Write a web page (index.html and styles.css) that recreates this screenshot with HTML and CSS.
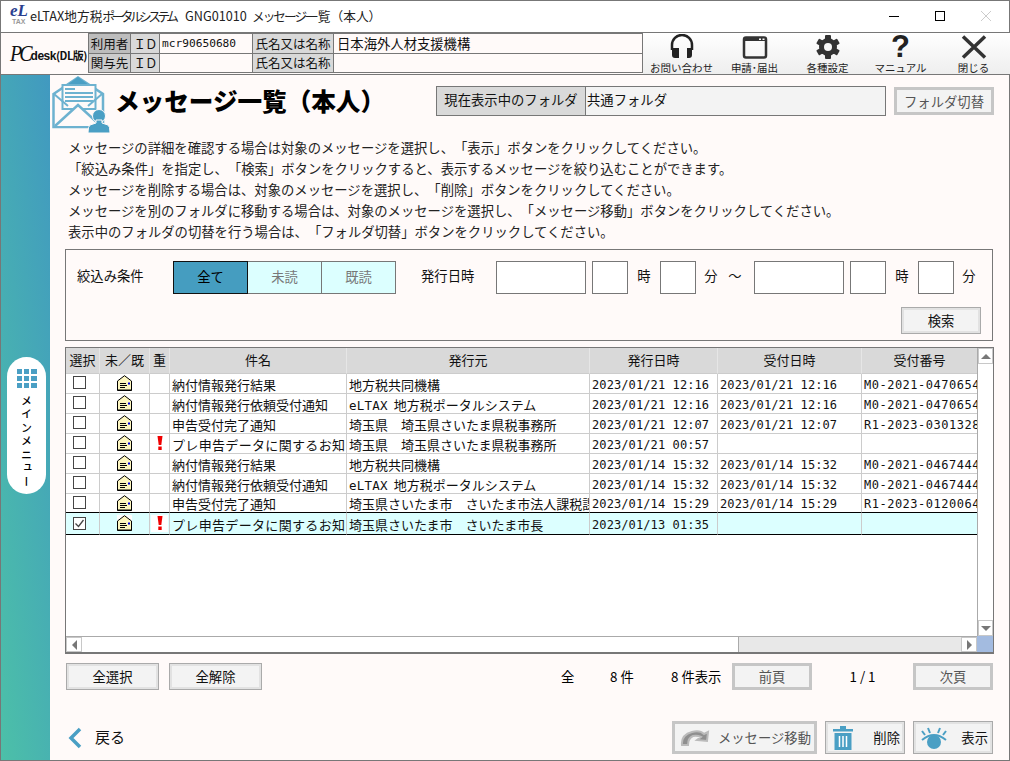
FILE: index.html
```html
<!DOCTYPE html>
<html lang="ja">
<head>
    <meta charset="UTF-8">
    <title>メッセージ一覧（本人）</title>
    <link rel="stylesheet" href="styles.css">
</head>
<body>
    <svg class="defs" width="0" height="0">
        <symbol id="mail" viewBox="0 0 15 16">
            <path d="M.5 15.5V6L7.5.7 14.5 6v9.5z" fill="#fdf6c0" stroke="#000"/>
            <path d="M.5 15h14M3 8.5h6M3 10.5h7M3 12.5h5" stroke="#000" fill="none"/>
            <rect x="11" y="7.5" width="2" height="2" fill="#0000e0"/>
        </symbol>
        <symbol id="alert" viewBox="0 0 6 14">
            <path d="M.5 0h5L4.300 9H1.700z" fill="#f00000"/>
            <rect x="1.300" y="10.500" width="3.400" height="3.500" fill="#f00000"/>
        </symbol>
    </svg>
    <div class="window">
        <div class="titlebar">
            <div class="app-logo"><span class="app-logo--el">eL</span><span class="app-logo--tax">TAX</span></div>
            <span class="titlebar-text titlebar-app">eLTAX地方税<span class="kana">ポータルシステム</span></span>
            <span class="titlebar-text titlebar-id">GNG01010</span>
            <span class="titlebar-text"><span class="kana-2">メッセージ</span>一覧（本人）</span>
            <div class="win-buttons">
                <svg width="10" height="10" viewBox="0 0 10 10"><path d="M0 5.500h10" stroke="#000"/></svg>
                <svg width="10" height="10" viewBox="0 0 10 10"><rect x=".5" y=".5" width="9" height="9" fill="none" stroke="#000"/></svg>
                <svg width="10" height="10" viewBox="0 0 10 10"><path d="M0 0l10 10M10 0L0 10" stroke="#ccc"/></svg>
            </div>
        </div>
        <div class="infobar">
            <div class="pc-logo"><i>PC</i><b>desk</b><span>(DL版)</span></div>
            <div class="user-table">
                <div class="cell cell-role">利用者</div>
                <div class="cell cell-label cell-id">ＩＤ</div>
                <div class="cell cell-code">mcr90650680</div>
                <div class="cell cell-label">氏名又は名称</div>
                <div class="cell cell-name">日本海外人材支援機構</div>
                <div class="cell cell-role cell-role--2">関与先</div>
                <div class="cell cell-label cell-id">ＩＤ</div>
                <div class="cell cell-code"></div>
                <div class="cell cell-label">氏名又は名称</div>
                <div class="cell cell-name"></div>
            </div>
            <div class="tools">
                <div class="tool">
                    <svg width="26" height="26" viewBox="0 0 26 26"><path d="M3 16V11a10 10 0 0 1 20 0v5" fill="none" stroke="#222" stroke-width="2.500"/><path d="M3 14h7v10H6q-3 0-3-3zM23 14h-5v10h2q3 0 3-3z" fill="#222"/></svg>
                    <span>お問い合わせ</span>
                </div>
                <div class="tool">
                    <svg width="26" height="26" viewBox="0 0 26 26"><rect x="2" y="3.500" width="22" height="20" rx="2" fill="none" stroke="#333" stroke-width="2.500"/><path d="M2 4h22v3H2z" fill="#333"/><path d="M17 4.500h2V6h-2zM20.500 4.500h2V6h-2z" fill="#fff"/></svg>
                    <span>申請･届出</span>
                </div>
                <div class="tool">
                    <svg width="26" height="26" viewBox="0 0 26 26">
                        <g fill="#333">
                            <rect x="10" y="1" width="6" height="24" rx="1"/>
                            <rect x="10" y="1" width="6" height="24" rx="1" transform="rotate(60 13 13)"/>
                            <rect x="10" y="1" width="6" height="24" rx="1" transform="rotate(120 13 13)"/>
                            <circle cx="13" cy="13" r="9"/>
                        </g>
                        <circle cx="13" cy="13" r="4" fill="#f8f8f8"/>
                    </svg>
                    <span>各種設定</span>
                </div>
                <div class="tool">
                    <b class="tool-help">?</b>
                    <span>マニュアル</span>
                </div>
                <div class="tool">
                    <svg width="26" height="26" viewBox="0 0 26 26"><path d="M2 2.500l22 21M24 2.500L2 23.500" stroke="#333" stroke-width="3.500" fill="none"/></svg>
                    <span>閉じる</span>
                </div>
            </div>
        </div>
        <div class="body">
            <aside class="sidebar">
                <div class="menu-pill">
                    <div class="menu-grid">
                        <i></i><i></i><i></i><i></i><i></i><i></i><i></i><i></i><i></i>
                    </div>
                    <div class="menu-text">メインメニュー</div>
                </div>
            </aside>
            <main class="main">
                <div class="page-head">
                    <svg class="page-icon" width="60" height="58" viewBox="0 0 60 58">
                        <path d="M1.500 18L26 1.500 51 18v33H1.500z" fill="none" stroke="#6db2d0" stroke-width="2.500"/>
                        <path d="M15 9L26 1l11 8z" fill="#4a9fc4"/>
                        <rect x="10.500" y="9" width="33" height="24" fill="#fffaf9" stroke="#6db2d0" stroke-width="2"/>
                        <path d="M13 12h10v2H13zM13 16h28v2H13zM13 20h28v2H13zM13 24h28v2H13z" fill="#6db2d0"/>
                        <path d="M2 18l14 12M50 18L36 30" stroke="#6db2d0" stroke-width="2"/>
                        <path d="M3 50l23-21 23 21" fill="#fffaf9" stroke="#6db2d0" stroke-width="2.500"/>
                        <circle cx="47" cy="40" r="6.500" fill="#4a9fc4" stroke="#fffaf9"/>
                        <path d="M44 44h6v3l6 2q2 1 2 8H36q0-7 2-8l6-2z" fill="#4a9fc4" stroke="#fffaf9"/>
                    </svg>
                    <h1>メッセージ一覧（本人）</h1>
                    <div class="folder">
                        <div class="folder-label">現在表示中のフォルダ</div>
                        <div class="folder-value">共通フォルダ</div>
                    </div>
                    <button class="btn btn-off btn-folder">フォルダ切替</button>
                </div>
                <div class="guide">
                    <p>メッセージの詳細を確認する場合は対象のメッセージを選択し、「表示」ボタンをクリックしてください。</p>
                    <p>「絞込み条件」を指定し、「検索」ボタンをクリックすると、表示するメッセージを絞り込むことができます。</p>
                    <p>メッセージを削除する場合は、対象のメッセージを選択し、「削除」ボタンをクリックしてください。</p>
                    <p>メッセージを別のフォルダに移動する場合は、対象のメッセージを選択し、「メッセージ移動」ボタンをクリックしてください。</p>
                    <p>表示中のフォルダの切替を行う場合は、「フォルダ切替」ボタンをクリックしてください。</p>
                </div>
                <div class="filter">
                    <div class="filter-row">
                        <span class="filter-title">絞込み条件</span>
                        <div class="tabs">
                            <div class="tab active">全て</div>
                            <div class="tab">未読</div>
                            <div class="tab">既読</div>
                        </div>
                        <span class="filter-date">発行日時</span>
                        <div class="field field-date"></div>
                        <div class="field field-time"></div>
                        <span class="unit unit-hour">時</span>
                        <div class="field field-time"></div>
                        <span class="unit unit-min">分</span>
                        <span class="unit unit-wave">～</span>
                        <div class="field field-date"></div>
                        <div class="field field-time"></div>
                        <span class="unit unit-hour">時</span>
                        <div class="field field-time"></div>
                        <span class="unit unit-min">分</span>
                    </div>
                    <div class="filter-foot">
                        <button class="btn btn-search">検索</button>
                    </div>
                </div>
                <div class="list">
                    <div class="list-body">
                        <table class="msg-table">
                            <colgroup>
                                <col class="c1"><col class="c2"><col class="c3"><col class="c4"><col class="c5"><col class="c6"><col class="c7"><col class="c8">
                            </colgroup>
                            <thead>
                                <tr><th>選択</th><th>未／既</th><th>重</th><th>件名</th><th>発行元</th><th>発行日時</th><th>受付日時</th><th>受付番号</th></tr>
                            </thead>
                            <tbody>
                                <tr>
                                    <td class="mid"><span class="check"></span></td>
                                    <td class="mid"><svg class="mail"><use href="#mail"/></svg></td>
                                    <td class="mid"></td>
                                    <td>納付情報発行結果</td>
                                    <td>地方税共同機構</td>
                                    <td class="num">2023/01/21 12:16</td>
                                    <td class="num">2023/01/21 12:16</td>
                                    <td class="num code">M0-2021-0470654</td>
                                </tr>
                                <tr>
                                    <td class="mid"><span class="check"></span></td>
                                    <td class="mid"><svg class="mail"><use href="#mail"/></svg></td>
                                    <td class="mid"></td>
                                    <td>納付情報発行依頼受付通知</td>
                                    <td><span class="lat">eLTAX</span>地方税ポータルシステム</td>
                                    <td class="num">2023/01/21 12:16</td>
                                    <td class="num">2023/01/21 12:16</td>
                                    <td class="num code">M0-2021-0470654</td>
                                </tr>
                                <tr>
                                    <td class="mid"><span class="check"></span></td>
                                    <td class="mid"><svg class="mail"><use href="#mail"/></svg></td>
                                    <td class="mid"></td>
                                    <td>申告受付完了通知</td>
                                    <td>埼玉県　埼玉県さいたま県税事務所</td>
                                    <td class="num">2023/01/21 12:07</td>
                                    <td class="num">2023/01/21 12:07</td>
                                    <td class="num code">R1-2023-0301328</td>
                                </tr>
                                <tr>
                                    <td class="mid"><span class="check"></span></td>
                                    <td class="mid"><svg class="mail"><use href="#mail"/></svg></td>
                                    <td class="mid"><svg class="alert"><use href="#alert"/></svg></td>
                                    <td class="wide">プレ申告データに関するお知</td>
                                    <td>埼玉県　埼玉県さいたま県税事務所</td>
                                    <td class="num">2023/01/21 00:57</td>
                                    <td class="num"></td>
                                    <td class="num"></td>
                                </tr>
                                <tr>
                                    <td class="mid"><span class="check"></span></td>
                                    <td class="mid"><svg class="mail"><use href="#mail"/></svg></td>
                                    <td class="mid"></td>
                                    <td>納付情報発行結果</td>
                                    <td>地方税共同機構</td>
                                    <td class="num">2023/01/14 15:32</td>
                                    <td class="num">2023/01/14 15:32</td>
                                    <td class="num code">M0-2021-0467444</td>
                                </tr>
                                <tr>
                                    <td class="mid"><span class="check"></span></td>
                                    <td class="mid"><svg class="mail"><use href="#mail"/></svg></td>
                                    <td class="mid"></td>
                                    <td>納付情報発行依頼受付通知</td>
                                    <td><span class="lat">eLTAX</span>地方税ポータルシステム</td>
                                    <td class="num">2023/01/14 15:32</td>
                                    <td class="num">2023/01/14 15:32</td>
                                    <td class="num code">M0-2021-0467444</td>
                                </tr>
                                <tr class="before-selected">
                                    <td class="mid"><span class="check"></span></td>
                                    <td class="mid"><svg class="mail"><use href="#mail"/></svg></td>
                                    <td class="mid"></td>
                                    <td>申告受付完了通知</td>
                                    <td>埼玉県さいたま市　さいたま市法人課税課</td>
                                    <td class="num">2023/01/14 15:29</td>
                                    <td class="num">2023/01/14 15:29</td>
                                    <td class="num code">R1-2023-0120064</td>
                                </tr>
                                <tr class="selected">
                                    <td class="mid"><span class="check on"><svg width="11" height="11" viewBox="0 0 11 11"><path d="M1.500 5.500l3 3 5-6.500" fill="none" stroke="#444" stroke-width="1.300"/></svg></span></td>
                                    <td class="mid"><svg class="mail mail-bg"><use href="#mail"/></svg></td>
                                    <td class="mid"><span class="alert-bg"><svg class="alert"><use href="#alert"/></svg></span></td>
                                    <td class="wide">プレ申告データに関するお知</td>
                                    <td>埼玉県さいたま市　さいたま市長</td>
                                    <td class="num">2023/01/13 01:35</td>
                                    <td class="num"></td>
                                    <td class="num"></td>
                                </tr>
                            </tbody>
                        </table>
                    </div>
                    <div class="vbar">
                        <div class="sb-btn"><span class="arrow-up"></span></div>
                        <div class="vbar-track"></div>
                        <div class="sb-btn"><span class="arrow-down"></span></div>
                    </div>
                    <div class="hbar">
                        <div class="sb-btn sb-btn--h"><span class="arrow-left"></span></div>
                        <div class="hbar-thumb"></div>
                        <div class="hbar-track"></div>
                        <div class="sb-btn sb-btn--h"><span class="arrow-right"></span></div>
                    </div>
                    <div class="corner"></div>
                </div>
                <div class="pager">
                    <button class="btn btn-select">全選択</button>
                    <button class="btn btn-select">全解除</button>
                    <span class="pager-all">全</span>
                    <span class="pager-count">8 件</span>
                    <span class="pager-shown">8 件表示</span>
                    <button class="btn btn-off btn-page">前頁</button>
                    <span class="pager-pos">1 / 1</span>
                    <button class="btn btn-off btn-page">次頁</button>
                </div>
                <div class="actions">
                    <svg class="back-icon" width="14" height="22" viewBox="0 0 14 22"><path d="M12 2L3 11l9 9" fill="none" stroke="#4a9fc4" stroke-width="3.500"/></svg>
                    <span class="back-text">戻る</span>
                    <button class="btn btn-off btn-act btn-move">
                        <svg width="30" height="18" viewBox="0 0 30 18"><path d="M2 16Q1 6 12 3q8-2 12 2l4-2-1 9-10-1 4-3q-4-2-8-1-5 2-5 9z" fill="#8f8f8f" stroke="#bbb" stroke-width="2"/></svg>
                        <span>メッセージ移動</span>
                    </button>
                    <button class="btn btn-act btn-del">
                        <svg width="20" height="24" viewBox="0 0 20 24"><path d="M0 3h20v2.500H0zM7 0h6v3H7z" fill="#4a9fc4"/><path d="M1.500 7h17v17h-17z" fill="#4a9fc4"/><path d="M6.500 10v11M10 10v11M13.500 10v11" stroke="#fff" stroke-width="1.500"/></svg>
                        <span>削除</span>
                    </button>
                    <button class="btn btn-act btn-show">
                        <svg width="26" height="24" viewBox="0 0 26 24"><circle cx="13" cy="16" r="7" fill="#4a9fc4"/><path d="M1 14q12-10 24 0" fill="none" stroke="#4a9fc4" stroke-width="2"/><path d="M1 5l3 4M7 2l2 5M19 2l-2 5M25 5l-3 4" stroke="#4a9fc4" stroke-width="2"/></svg>
                        <span>表示</span>
                    </button>
                </div>
            </main>
        </div>
    </div>
</body>
</html>
```

FILE: styles.css
```css
*,*::before,*::after{
    padding: 0;
    margin: 0;
    box-sizing: border-box;
}
body{
    width: 1010px;
    height: 761px;
    overflow: hidden;
    font-family: "Noto Sans CJK JP", "Liberation Sans", sans-serif;
    font-size: 13.33px;
    text-spacing-trim: space-all;
    color: #111;
    background: #fffaf9;
}
.defs{
    position: absolute;
}
.window{
    width: 1010px;
    height: 761px;
    border: 1px solid #777;
    display: flex;
    flex-direction: column;
}

/* タイトルバー */
.titlebar{
    height: 31px;
    background: #fff;
    display: flex;
    align-items: center;
    padding: 0 0 2px 8px;
    flex-shrink: 0;
}
.app-logo{
    width: 21px;
    height: 24px;
    position: relative;
    flex-shrink: 0;
}
.app-logo--el{
    position: absolute;
    top: -3px;
    left: 1px;
    font: italic bold 17px "Liberation Serif", serif;
    color: #2a3f8f;
}
.app-logo--tax{
    position: absolute;
    top: 14px;
    left: 3px;
    font: bold 7px "Liberation Sans", sans-serif;
    color: #999;
}
.titlebar-text{
    font-size: 12.7px;
    color: #222;
    white-space: nowrap;
}
.kana{
    letter-spacing: -3.5px;
}
.kana-2{
    letter-spacing: -2px;
}
.titlebar-app{
    width: 155px;
    flex-shrink: 0;
}
.titlebar-id{
    width: 67px;
    flex-shrink: 0;
}
.win-buttons{
    margin-left: auto;
    width: 102px;
    margin-right: 18px;
    display: flex;
    justify-content: space-between;
}

/* 利用者情報 */
.infobar{
    height: 43px;
    display: flex;
    flex-shrink: 0;
    border-top: 1px solid #777;
    border-bottom: 1px solid #777;
    background: #fffaf9;
}
.pc-logo{
    width: 87px;
    display: flex;
    align-items: baseline;
    padding: 9px 0 0 9px;
    white-space: nowrap;
    color: #111;
    flex-shrink: 0;
}
.pc-logo i{
    font: italic 20px "Liberation Serif", serif;
    letter-spacing: -3px;
    transform: scaleY(1.2);
}
.pc-logo b{
    font: bold 12px "Liberation Sans", sans-serif;
    margin-left: 1px;
    letter-spacing: -.5px;
}
.pc-logo span{
    font: bold 11px "Noto Sans CJK JP", sans-serif;
    letter-spacing: -.5px;
}
.user-table{
    width: 555px;
    height: 40px;
    display: grid;
    grid-template-columns: 42px 29px 93px 81px 1fr;
    grid-template-rows: 20px 18px;
    border: 1px solid #777;
    flex-shrink: 0;
}
.cell{
    font-size: 12.5px;
    border-right: 1px solid #777;
    border-bottom: 1px solid #777;
    line-height: 19px;
    white-space: nowrap;
    overflow: hidden;
}
.cell:nth-child(5n){
    border-right: none;
}
.cell:nth-child(n+6){
    border-bottom: none;
    line-height: 18px;
}
.cell-role{
    background: #bdbdbd;
    text-align: center;
}
.cell-role--2{
    background: #ccc;
}
.cell-label{
    background: #d9d9d9;
    text-align: center;
}
.cell-id{
    letter-spacing: -1px;
}
.cell-code{
    font: 11.2px/20px "DejaVu Sans Mono", monospace;
    padding-left: 2px;
}
.cell-name{
    font-size: 13.33px;
    padding-left: 3px;
}
.tools{
    flex: 1;
    display: flex;
    padding-left: 2px;
    background: linear-gradient(#fff, #eee);
}
.tool{
    width: 73px;
    display: flex;
    flex-direction: column;
    align-items: center;
    padding-top: 1px;
}
.tool svg{
    display: block;
    flex-shrink: 0;
}
.tool span{
    font-size: 10.5px;
    line-height: 15px;
    white-space: nowrap;
    color: #222;
}
.tool-help{
    height: 26px;
    font: bold 31px/26px "Liberation Sans", sans-serif;
    color: #222;
}

/* サイドメニュー */
.body{
    flex: 1;
    display: flex;
    min-height: 0;
}
.sidebar{
    width: 49px;
    flex-shrink: 0;
    padding: 282px 0 0 6px;
    background: linear-gradient(82deg, #4cc0a8, #4199c0);
}
.menu-pill{
    width: 39px;
    height: 137px;
    border-radius: 20px;
    background: #fff;
    padding-top: 12px;
    display: flex;
    flex-direction: column;
    align-items: center;
}
.menu-grid{
    width: 20px;
    display: grid;
    grid-template-columns: repeat(3, 1fr);
    gap: 2px;
}
.menu-grid i{
    height: 5px;
    background: #4a9fc4;
}
.menu-text{
    writing-mode: vertical-rl;
    font-size: 11px;
    line-height: 14px;
    letter-spacing: 2.5px;
    margin-top: 7px;
    font-weight: 500;
    color: #000;
}

/* メイン */
.main{
    flex: 1;
    padding: 0 16px 0 15px;
    display: flex;
    flex-direction: column;
    min-width: 0;
}
.page-head{
    height: 59px;
    display: flex;
    align-items: flex-start;
    margin-left: -15px;
    flex-shrink: 0;
}
.page-icon{
    margin: 1px 3px 0 2px;
    flex-shrink: 0;
}
.page-head h1{
    width: 321px;
    font-size: 24.6px;
    line-height: 30px;
    margin-top: 10px;
    font-weight: 900;
    color: #000;
    white-space: nowrap;
    flex-shrink: 0;
}
.folder{
    width: 450px;
    height: 30px;
    margin-top: 11px;
    display: flex;
    border: 1px solid #777;
    line-height: 26px;
    flex-shrink: 0;
}
.folder-label{
    width: 149px;
    background: #d9d9d9;
    text-align: center;
    border-right: 1px solid #777;
}
.folder-value{
    flex: 1;
    background: #f3f3f3;
    padding-left: 1px;
}
.btn{
    font-family: inherit;
    font-size: 13.33px;
    color: #111;
    background: #f3f3f3;
    border: 3px solid #e2e2e2;
    outline: 1px solid #aaa;
    outline-offset: -1px;
    cursor: pointer;
}
.btn-off{
    color: #555;
    border-color: #c6c6c6;
    outline: none;
}
.btn-folder{
    width: 100px;
    height: 28px;
    margin: 12px 0 0 8px;
    flex-shrink: 0;
}
.guide{
    margin: 3px 0 0 3px;
    height: 112px;
    flex-shrink: 0;
}
.guide p{
    line-height: 21px;
    white-space: nowrap;
    color: #222;
}
.filter{
    width: 928px;
    height: 92px;
    border: 1px solid #777;
    padding: 11px 8px 0 11px;
    flex-shrink: 0;
}
.filter-row{
    height: 33px;
    display: flex;
    align-items: center;
}
.filter-title{
    width: 96px;
    padding-bottom: 4px;
    flex-shrink: 0;
}
.tabs{
    display: flex;
    width: 223px;
    height: 33px;
    flex-shrink: 0;
}
.tab{
    flex: 1;
    text-align: center;
    line-height: 30px;
    color: #777;
    background: #dcffff;
    border: 1px solid #777;
    border-left: none;
}
.tab.active{
    color: #000;
    background: #459dc0;
    border: 1px solid #111;
}
.filter-date{
    width: 100px;
    padding-left: 25px;
    padding-bottom: 4px;
    flex-shrink: 0;
}
.field{
    height: 33px;
    background: #fff;
    border: 1px solid #777;
    flex-shrink: 0;
}
.field-date{
    width: 90px;
    margin-right: 6px;
}
.field-time{
    width: 36px;
}
.unit{
    text-align: center;
    padding-bottom: 4px;
    flex-shrink: 0;
}
.unit-hour{
    width: 32px;
}
.unit-min{
    width: 30px;
}
.unit-wave{
    width: 28px;
    padding-right: 10px;
}
.filter-foot{
    display: flex;
    justify-content: flex-end;
    margin-top: 13px;
    padding-right: 3px;
}
.btn-search{
    width: 80px;
    height: 27px;
}

/* 一覧 */
.list{
    width: 929px;
    height: 307px;
    margin-top: 6px;
    display: grid;
    grid-template-columns: 1fr 16px;
    grid-template-rows: 1fr 16px;
    border: 1px solid #777;
    border-bottom-width: 2px;
    background: #fff;
    flex-shrink: 0;
}
.list-body{
    overflow: hidden;
    min-width: 0;
    min-height: 0;
}
.msg-table{
    width: 912px;
    table-layout: fixed;
    border-collapse: separate;
    border-spacing: 0;
    background: #fff;
    font-size: 13px;
}
.c1{width: 34px;}
.c2{width: 50px;}
.c3{width: 20px;}
.c4{width: 177px;}
.c5{width: 243px;}
.c6{width: 128px;}
.c7{width: 144px;}
.c8{width: 116px;}
.msg-table th{
    height: 26px;
    padding-bottom: 3px;
    font-weight: 400;
    background: #d9d9d9;
    border-right: 1px solid #e6e6e6;
    border-bottom: 1px solid #ccc;
    white-space: nowrap;
}
.msg-table td{
    height: 20px;
    padding: 3px 2px 0;
    border-right: 1px solid #ccc;
    border-bottom: 1px solid #ccc;
    white-space: nowrap;
    overflow: hidden;
    line-height: 16px;
    vertical-align: top;
}
.msg-table td.wide{
    letter-spacing: .33px;
}
.msg-table td.mid{
    padding: 0;
    text-align: center;
}
.msg-table td.num{
    font: 12px/16px "DejaVu Sans Mono", monospace;
    letter-spacing: .1px;
}
.msg-table td.code{
    letter-spacing: .5px;
}
.lat{
    font: 12.5px/12px "DejaVu Sans Mono", monospace;
    letter-spacing: .2px;
    margin-right: 6px;
}
.check{
    display: block;
    width: 13px;
    height: 13px;
    margin: 2px 0 0 7px;
    background: #fff;
    border: 1px solid #444;
}
.check svg{
    display: block;
}
.mail{
    display: block;
    width: 15px;
    height: 16px;
    margin: 1px auto 0;
}
.alert{
    display: block;
    width: 6px;
    height: 14px;
    margin: 2px auto 0;
}
.msg-table .before-selected td{
    height: 19px;
    padding-top: 2px;
    border-bottom-color: #000;
}
.msg-table .before-selected td.mid{
    padding-top: 0;
}
.msg-table .selected td{
    height: 22px;
    padding-top: 4px;
    background: #dcffff;
    border-bottom-color: #000;
}
.msg-table .selected td.mid{
    padding-top: 0;
}
.selected .check{
    margin-top: 4px;
}
.selected .mail{
    margin-top: 2px;
}
.mail-bg{
    background: #fff;
}
.alert-bg{
    display: block;
    width: 17px;
    height: 17px;
    margin: 2px 0 0 1px;
    padding-top: 1px;
    background: #fff;
}
.alert-bg .alert{
    margin-top: 0;
}

/* スクロールバー */
.vbar{
    display: flex;
    flex-direction: column;
    border-left: 1px solid #aaa;
}
.vbar-track{
    flex: 1;
    background: #fff;
}
.sb-btn{
    height: 16px;
    display: flex;
    align-items: center;
    justify-content: center;
    background: #fff;
    border: 1px solid #c8c8c8;
    flex-shrink: 0;
}
.sb-btn--h{
    width: 16px;
    height: auto;
}
.arrow-up,.arrow-down,.arrow-left,.arrow-right{
    width: 0;
    height: 0;
    border: 5px solid transparent;
}
.arrow-up{
    border-bottom-color: #777;
    margin-top: -5px;
}
.arrow-down{
    border-top-color: #777;
    margin-top: 5px;
}
.arrow-left{
    border-right-color: #777;
    margin-left: -5px;
}
.arrow-right{
    border-left-color: #777;
    margin-left: 5px;
}
.hbar{
    display: flex;
    border-top: 1px solid #aaa;
}
.hbar-thumb{
    width: 657px;
    background: #fff;
    border-right: 1px solid #aaa;
}
.hbar-track{
    flex: 1;
    background: #e8e8e8;
}
.corner{
    background: #a3bbe0;
}

/* ページ操作 */
.pager{
    height: 27px;
    margin-top: 9px;
    display: flex;
    align-items: center;
    white-space: nowrap;
    color: #000;
    flex-shrink: 0;
}
.btn-select{
    width: 93px;
    height: 27px;
    margin-left: 1px;
    margin-right: 9px;
    flex-shrink: 0;
}
.pager-all{
    margin-left: 290px;
    width: 49px;
    flex-shrink: 0;
}
.pager-count{
    width: 61px;
    flex-shrink: 0;
}
.pager-shown{
    width: 61px;
    flex-shrink: 0;
}
.btn-page{
    width: 80px;
    height: 27px;
    flex-shrink: 0;
}
.pager-pos{
    width: 101px;
    text-align: center;
    flex-shrink: 0;
}

/* 下部ボタン */
.actions{
    height: 33px;
    margin-top: 31px;
    display: flex;
    align-items: center;
    flex-shrink: 0;
}
.back-icon{
    margin-left: 3px;
    flex-shrink: 0;
}
.back-text{
    width: 30px;
    font-size: 15px;
    margin-left: 13px;
    margin-bottom: 3px;
    white-space: nowrap;
    flex-shrink: 0;
}
.btn-act{
    height: 33px;
    display: flex;
    align-items: center;
    justify-content: space-between;
    padding: 0 2px 0 5px;
    white-space: nowrap;
    flex-shrink: 0;
}
.btn-move{
    width: 145px;
    margin-left: 547px;
    padding-right: 3px;
}
.btn-del{
    width: 80px;
    margin-left: 8px;
}
.btn-show{
    width: 80px;
    margin-left: 8px;
}
```
